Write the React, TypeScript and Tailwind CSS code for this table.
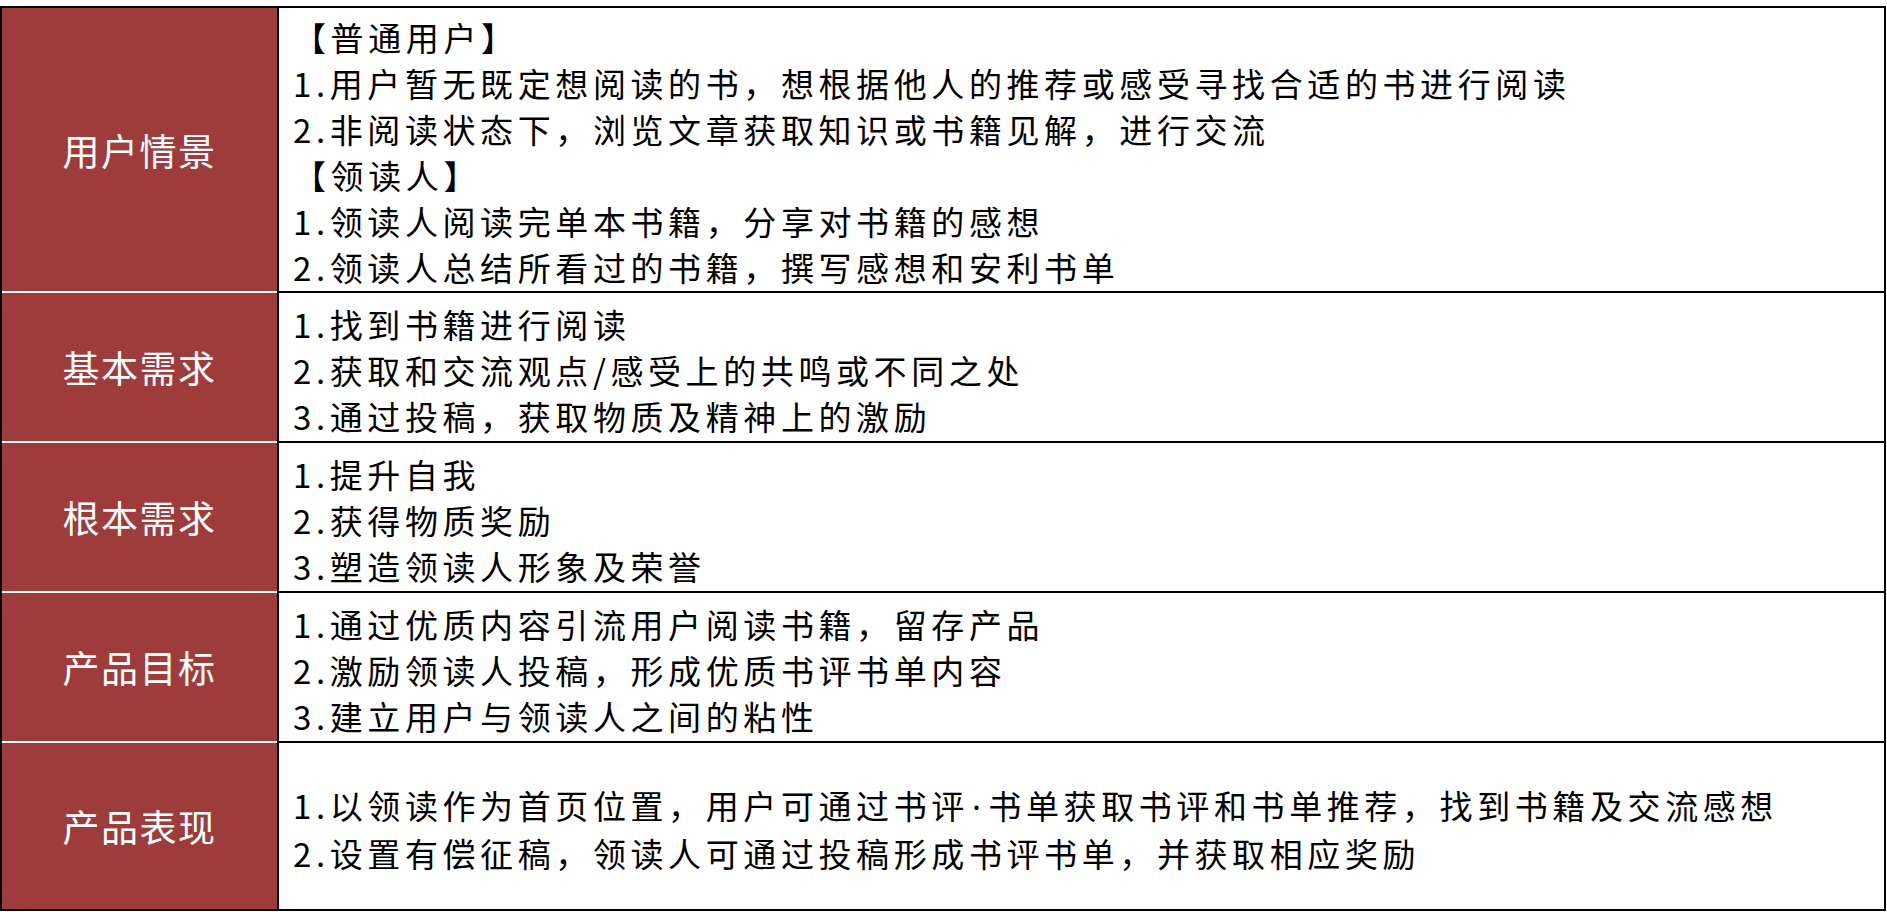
import React from "react";

type Row = { title: string; lines: React.ReactNode[]; h: string; first?: boolean };

const rows: Row[] = [
  {
    title: "用户情景",
    h: "h-[283px]",
    first: true,
    lines: [
      "【普通用户】",
      "1.用户暂无既定想阅读的书，想根据他人的推荐或感受寻找合适的书进行阅读",
      "2.非阅读状态下，浏览文章获取知识或书籍见解，进行交流",
      "【领读人】",
      "1.领读人阅读完单本书籍，分享对书籍的感想",
      "2.领读人总结所看过的书籍，撰写感想和安利书单",
    ],
  },
  {
    title: "基本需求",
    h: "h-[150px]",
    lines: ["1.找到书籍进行阅读", "2.获取和交流观点/感受上的共鸣或不同之处", "3.通过投稿，获取物质及精神上的激励"],
  },
  {
    title: "根本需求",
    h: "h-[150px]",
    lines: ["1.提升自我", "2.获得物质奖励", "3.塑造领读人形象及荣誉"],
  },
  {
    title: "产品目标",
    h: "h-[150px]",
    lines: [
      "1.通过优质内容引流用户阅读书籍，留存产品",
      "2.激励领读人投稿，形成优质书评书单内容",
      "3.建立用户与领读人之间的粘性",
    ],
  },
  {
    title: "产品表现",
    h: "h-[168px]",
    lines: [
      <>
        1.以领读作为首页位置，用户可通过书评
        <span className="font-['Noto_Sans',sans-serif] mx-[3px]">·</span>
        书单获取书评和书单推荐，找到书籍及交流感想
      </>,
      "2.设置有偿征稿，领读人可通过投稿形成书评书单，并获取相应奖励",
    ],
  },
];

export default function App() {
  return (
    <div className="w-[1887px] h-[912px] bg-white pt-[6px] font-['Noto_Sans_CJK_SC','Noto_Sans',sans-serif]">
      <div className="w-[1886px] border-2 border-black flex flex-col">
        {rows.map((r) => (
          <div key={r.title} className={`flex ${r.h}`}>
            <div
              className={`w-[275px] shrink-0 bg-[#9e3c3c] text-white flex items-center justify-center text-[37px] tracking-[1.5px] pt-[2px] ${
                r.first ? "" : "border-t-2 border-white"
              }`}
            >
              {r.title}
            </div>
            <div
              className={`flex-1 border-l-2 border-black flex flex-col justify-center pl-[14px] pt-[5px] text-black text-[33px] leading-[46px] tracking-[4.6px] ${
                r.first ? "" : "border-t-2"
              }`}
            >
              {r.lines.map((l, i) => (
                <div key={i} className="whitespace-nowrap">
                  {l}
                </div>
              ))}
            </div>
          </div>
        ))}
      </div>
    </div>
  );
}
